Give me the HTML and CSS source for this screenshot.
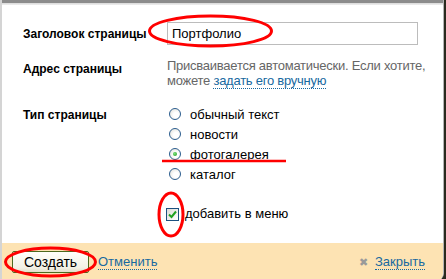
FILE: index.html
```html
<!DOCTYPE html>
<html lang="ru">
<head>
    <meta charset="UTF-8">
    <title>Новая страница</title>
    <link rel="stylesheet" href="styles.css">
</head>
<body>
    <div class="dialog">
        <div class="dialog-top"></div>
        <div class="form">
            <div class="row row-title">
                <div class="label">Заголовок страницы</div>
                <div class="field"><input type="text" class="text-input" value="Портфолио"></div>
            </div>
            <div class="row row-address">
                <div class="label">Адрес страницы</div>
                <div class="field hint">Присваивается автоматически. Если хотите,<br>можете <a href="#" class="link">задать его вручную</a></div>
            </div>
            <div class="row row-type">
                <div class="label">Тип страницы</div>
                <div class="field">
                    <div class="option"><span class="radio"></span>обычный текст</div>
                    <div class="option"><span class="radio"></span>новости</div>
                    <div class="option"><span class="radio checked"></span>фотогалерея</div>
                    <div class="option"><span class="radio"></span>каталог</div>
                </div>
            </div>
            <div class="row row-menu">
                <div class="label"></div>
                <div class="field option">
                    <span class="checkbox">
                        <svg width="11" height="11" viewBox="0 0 11 11"><path d="M2 5.5 L4.5 8 L9 2.5" fill="none" stroke="#21a121" stroke-width="2"/></svg>
                    </span>добавить в меню
                </div>
            </div>
        </div>
        <div class="footer">
            <button class="btn">Создать</button>
            <a href="#" class="link">Отменить</a>
            <span class="spacer"></span>
            <span class="close-x">✖</span>
            <a href="#" class="link">Закрыть</a>
        </div>
    </div>

    <svg class="marks" width="446" height="279" viewBox="0 0 446 279">
        <ellipse cx="210.5" cy="31" rx="61" ry="15" fill="none" stroke="#f00" stroke-width="3"/>
        <line x1="162" y1="161" x2="286" y2="161" stroke="#f00" stroke-width="2.5"/>
        <ellipse cx="171" cy="214.5" rx="12" ry="21.5" fill="none" stroke="#f00" stroke-width="3"/>
        <ellipse cx="50.5" cy="262" rx="45" ry="14" fill="none" stroke="#f00" stroke-width="3"/>
    </svg>
</body>
</html>
```

FILE: styles.css
```css
body {
    margin: 0;
    height: 279px;
    overflow: hidden;
    background-color: #2a2a1e;
    font-family: "Liberation Sans", Arial, sans-serif;
    font-size: 13px;
    color: #000;
}
.dialog {
    width: 441px;
    height: 281px;
    background-color: #fff;
    border-left: 2px solid #d4d4d4;
    border-right: 1px solid #b4b4b4;
    border-bottom-right-radius: 8px;
    display: flex;
    flex-direction: column;
    overflow: hidden;
}
.dialog-top {
    height: 5px;
    background: linear-gradient(#8c8c8c 0, #8c8c8c 3px, #d8d8d8 3px, #efefef 5px);
}
.form {
    padding: 17px 0 0 21px;
    flex: 1;
}
.row {
    display: grid;
    grid-template-columns: 144px 251px;
}
.label {
    font-size: 12px;
    font-weight: bold;
    line-height: 16px;
}
.row-title {
    align-items: center;
}
.text-input {
    display: block;
    box-sizing: border-box;
    width: 251px;
    height: 23px;
    margin: 0;
    padding: 0 4px;
    border: 1px solid #bcbcbc;
    font-family: inherit;
    font-size: 13px;
    color: #000;
    outline: none;
}
.row-address {
    margin-top: 13px;
}
.row-address .label {
    padding-top: 3px;
}
.hint {
    color: #666;
    line-height: 15px;
    white-space: nowrap;
    letter-spacing: -0.25px;
}
.link {
    color: #1769a0;
    text-decoration: none;
    border-bottom: 1px dotted #1769a0;
}
.row-type {
    margin-top: 19px;
}
.option {
    display: flex;
    align-items: flex-start;
    line-height: 16px;
    padding-bottom: 4px;
}
.radio {
    box-sizing: border-box;
    width: 12px;
    height: 12px;
    margin: 1px 9px 0 2px;
    border: 1px solid #2c5d8e;
    border-radius: 50%;
    background: radial-gradient(circle at 60% 60%, #fff 0, #fff 30%, #dcdcd4 100%);
    display: flex;
    align-items: center;
    justify-content: center;
}
.radio.checked::after {
    content: "";
    width: 4px;
    height: 4px;
    border-radius: 50%;
    background: radial-gradient(circle at 40% 40%, #7de07d, #1a9a1a);
}
.row-menu {
    margin-top: 19px;
}
.checkbox {
    box-sizing: border-box;
    width: 13px;
    height: 13px;
    margin: 2px 6px 0 -1px;
    border: 1px solid #1c5180;
    background: linear-gradient(135deg, #dcdcd6, #fff);
    display: flex;
    align-items: center;
    justify-content: center;
}
.footer {
    height: 38px;
    box-sizing: border-box;
    background-color: #fde3b3;
    padding: 8px 18px 0 10px;
    display: flex;
    align-items: flex-start;
}
.btn {
    width: 77px;
    height: 22px;
    margin-right: 9px;
    padding: 0;
    border: 1px solid #4d6a1f;
    border-radius: 2px;
    background: linear-gradient(#fffffb, #f2f0e4 80%, #e2dec8);
    font-family: inherit;
    font-size: 14px;
    color: #000;
    line-height: 20px;
}
.footer .link {
    margin-top: 3px;
    line-height: 15px;
}
.spacer {
    flex: 1;
}
.close-x {
    color: #9a9a9a;
    font-size: 11px;
    line-height: 15px;
    margin: 4px 7px 0 0;
}
.marks {
    position: absolute;
    top: 0;
    left: 0;
    pointer-events: none;
}
```
